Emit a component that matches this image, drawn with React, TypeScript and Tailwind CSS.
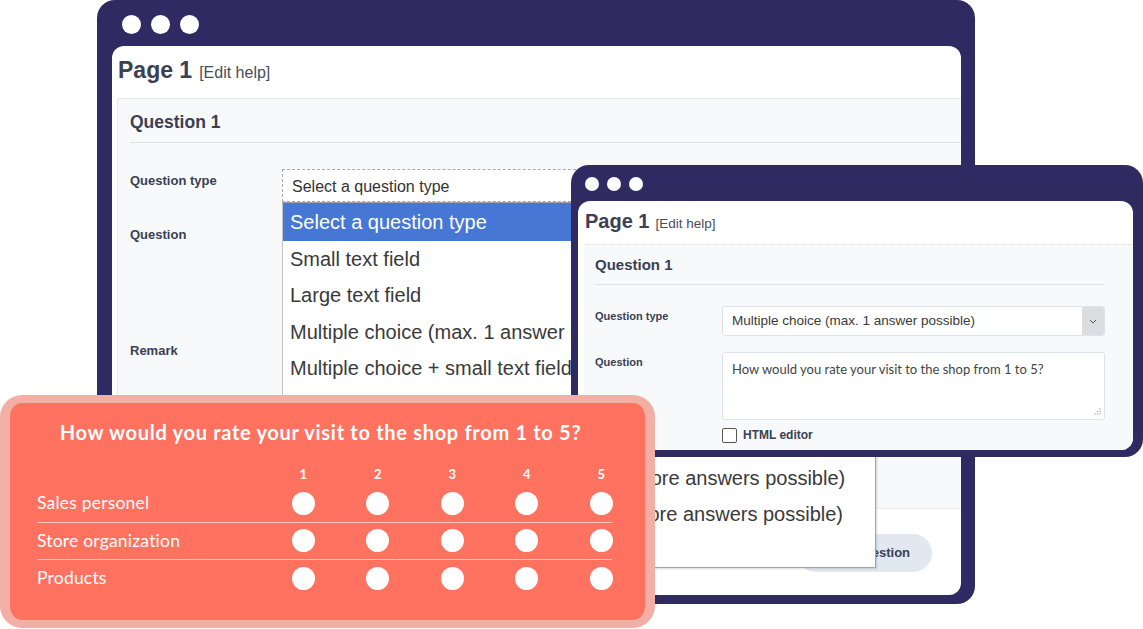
import React from "react";

const options = [
  "Select a question type",
  "Small text field",
  "Large text field",
  "Multiple choice (max. 1 answer possible)",
  "Multiple choice + small text field (max. 1 answer possible)",
  "Multiple choice + large text field (max. 1 answer possible)",
  "Dropdown (max. 1 answer possible)",
  "Multiple choice + small text fields (2 or more answers possible)",
  "Multiple choice + large text fields (2 or more answers possible)",
  "Date field",
];

const rows = ["Sales personel", "Store organization", "Products"];

function Dot({ size }: { size: "lg" | "sm" }) {
  return size === "lg" ? (
    <div className="h-[19px] w-[19px] rounded-full bg-white" />
  ) : (
    <div className="h-[14px] w-[14px] rounded-full bg-white" />
  );
}

export default function App() {
  return (
    <div className="relative h-[629px] w-[1143px] overflow-hidden bg-white font-['Liberation_Sans',Arial,sans-serif]">
      {/* Big window */}
      <div className="absolute left-[97px] top-0 flex h-[604px] w-[878px] flex-col rounded-[18px] bg-[#2f2b62]">
        <div className="flex h-[46px] shrink-0 gap-[10px] pl-[25px] pt-[15px]">
          <Dot size="lg" />
          <Dot size="lg" />
          <Dot size="lg" />
        </div>
        <div className="mb-[9px] ml-[15px] mr-[14px] flex flex-1 flex-col rounded-[12px] bg-white">
          <div className="flex h-[52px] shrink-0 items-baseline pl-[6px] pt-[7px]">
            <span className="text-[23px] font-bold text-[#3b4055]">Page 1</span>
            <span className="ml-[7px] text-[16px] text-[#4a4d57]">[Edit help]</span>
          </div>
          <div className="ml-[5px] h-[411px] shrink-0 rounded-tl-[3px] border-b border-l border-t border-[#e6e9ee] bg-[#f8f9fa] pl-[12px]">
            <div className="flex h-[44px] items-center border-b border-[#dde3ea] pt-[3px] text-[17.5px] font-bold text-[#3b4055]">
              Question 1
            </div>
            <div className="flex">
              <div className="flex w-[152px] shrink-0 flex-col text-[13px] font-bold leading-[15px] text-[#3b4055]">
                <div className="mt-[30px]">Question type</div>
                <div className="mt-[39px]">Question</div>
                <div className="mt-[101px]">Remark</div>
              </div>
              <div className="relative mt-[26px] h-[33px] w-[660px] border border-dashed border-[#a9a9a9] bg-white pl-[9px] pt-[1px] text-[16px] leading-[31px] text-[#333]">
                Select a question type
                <div className="absolute left-[-1px] top-[32px] flex h-[366px] w-[594px] flex-col border border-[#a3a3a3] border-l-[#c4c4c4] bg-white shadow-[1px_1px_2px_rgba(0,0,0,0.15)]">
                  {options.map((o, i) =>
                    i === 0 ? (
                      <div
                        key={o}
                        className="flex h-[38px] shrink-0 items-center whitespace-nowrap bg-[#4677d4] pl-[7px] text-[20px] text-white"
                      >
                        {o}
                      </div>
                    ) : (
                      <div
                        key={o}
                        className="flex h-[36.5px] shrink-0 items-center whitespace-nowrap pl-[7px] text-[20px] text-[#3a3a3a]"
                      >
                        {o}
                      </div>
                    )
                  )}
                </div>
              </div>
            </div>
          </div>
          <div className="flex justify-end pr-[29px] pt-[25px]">
            <div className="flex h-[38px] w-[135px] items-center justify-center rounded-full bg-[#e2e8f0] pl-[8px] text-[13px] font-bold text-[#3b4055]">
              Add question
            </div>
          </div>
        </div>
      </div>

      {/* Small window */}
      <div className="absolute left-[571px] top-[165px] flex h-[292px] w-[572px] flex-col rounded-[18px] bg-[#2f2b62]">
        <div className="flex h-[36px] shrink-0 gap-[8px] pl-[14px] pt-[12px]">
          <Dot size="sm" />
          <Dot size="sm" />
          <Dot size="sm" />
        </div>
        <div className="mb-[7px] ml-[7px] mr-[10px] flex flex-1 flex-col overflow-hidden rounded-[12px] bg-white">
          <div className="flex h-[43px] shrink-0 items-baseline pl-[7px] pt-[5px]">
            <span className="text-[20px] font-bold text-[#3b4055]">Page 1</span>
            <span className="ml-[6px] text-[13.5px] text-[#4a4d57]">[Edit help]</span>
          </div>
          <div className="ml-[6px] flex-1 border-t border-dotted border-[#dfe3e8] bg-[#f8f9fa] pl-[11px] pr-[28px]">
            <div className="flex h-[40px] items-center border-b border-[#dde3ea] pt-[2px] text-[15px] font-bold text-[#3b4055]">
              Question 1
            </div>
            <div className="flex">
              <div className="flex w-[127px] shrink-0 flex-col text-[11px] font-bold leading-[13px] text-[#3b4055]">
                <div className="mt-[25px]">Question type</div>
                <div className="mt-[33px]">Question</div>
              </div>
              <div className="flex flex-1 flex-col pt-[21px]">
                <div className="flex h-[30px] items-stretch overflow-hidden rounded-[3px] border border-[#dde3ea] bg-white">
                  <div className="flex flex-1 items-center pl-[9px] text-[13.5px] text-[#3a3a3a]">
                    Multiple choice (max. 1 answer possible)
                  </div>
                  <div className="flex w-[22px] items-center justify-center bg-[#dcdde1]">
                    <svg width="8" height="5" viewBox="0 0 8 5">
                      <path d="M1 1l3 3 3-3" fill="none" stroke="#555" strokeWidth="1" />
                    </svg>
                  </div>
                </div>
                <div className="relative mt-[16px] h-[68px] rounded-[3px] border border-[#dde3ea] bg-white pl-[9px] pt-[7px] font-['Lato',sans-serif] text-[13px] text-[#444]">
                  How would you rate your visit to the shop from 1 to 5?
                  <svg className="absolute bottom-[3px] right-[3px]" width="8" height="8" viewBox="0 0 8 8">
                    <circle cx="7" cy="1" r="0.7" fill="#999" />
                    <circle cx="4.5" cy="3.5" r="0.7" fill="#999" />
                    <circle cx="7" cy="3.5" r="0.7" fill="#999" />
                    <circle cx="2" cy="6" r="0.7" fill="#999" />
                    <circle cx="4.5" cy="6" r="0.7" fill="#999" />
                    <circle cx="7" cy="6" r="0.7" fill="#999" />
                  </svg>
                </div>
                <div className="mt-[6px] flex items-center gap-[6px]">
                  <div className="h-[15px] w-[15px] rounded-[2px] border-[1.5px] border-[#555] bg-white" />
                  <span className="text-[12px] font-bold text-[#3b4055]">HTML editor</span>
                </div>
              </div>
            </div>
          </div>
        </div>
      </div>

      {/* Red survey card */}
      <div className="absolute left-0 top-[395px] h-[233px] w-[655px] rounded-[22px] border-x-[10px] border-y-[8px] border-[#f3aea5] bg-[#fe725f] font-['Lato',sans-serif] text-white">
        <div className="pr-[14px] pt-[17px] text-center text-[20px] font-bold leading-[24px] tracking-[0.7px]">
          How would you rate your visit to the shop from 1 to 5?
        </div>
        <div className="mt-[21px] flex h-[20px] items-center pl-[256px]">
          {[1, 2, 3, 4, 5].map((n) => (
            <div key={n} className="w-[74.5px] text-center text-[13px] font-bold">
              {n}
            </div>
          ))}
        </div>
        <div className="pl-[27px]">
          {rows.map((r, i) => (
            <div key={r}>
              {i > 0 && <div className="h-[1px] w-[575px] bg-white/60" />}
              <div className="flex h-[36.5px] items-center">
                <div className="w-[229px] text-[17.5px] tracking-[0.2px]">{r}</div>
                {[1, 2, 3, 4, 5].map((n) => (
                  <div key={n} className="flex w-[74.5px] justify-center">
                    <div className="h-[23px] w-[23px] rounded-full bg-white" />
                  </div>
                ))}
              </div>
            </div>
          ))}
        </div>
      </div>
    </div>
  );
}
